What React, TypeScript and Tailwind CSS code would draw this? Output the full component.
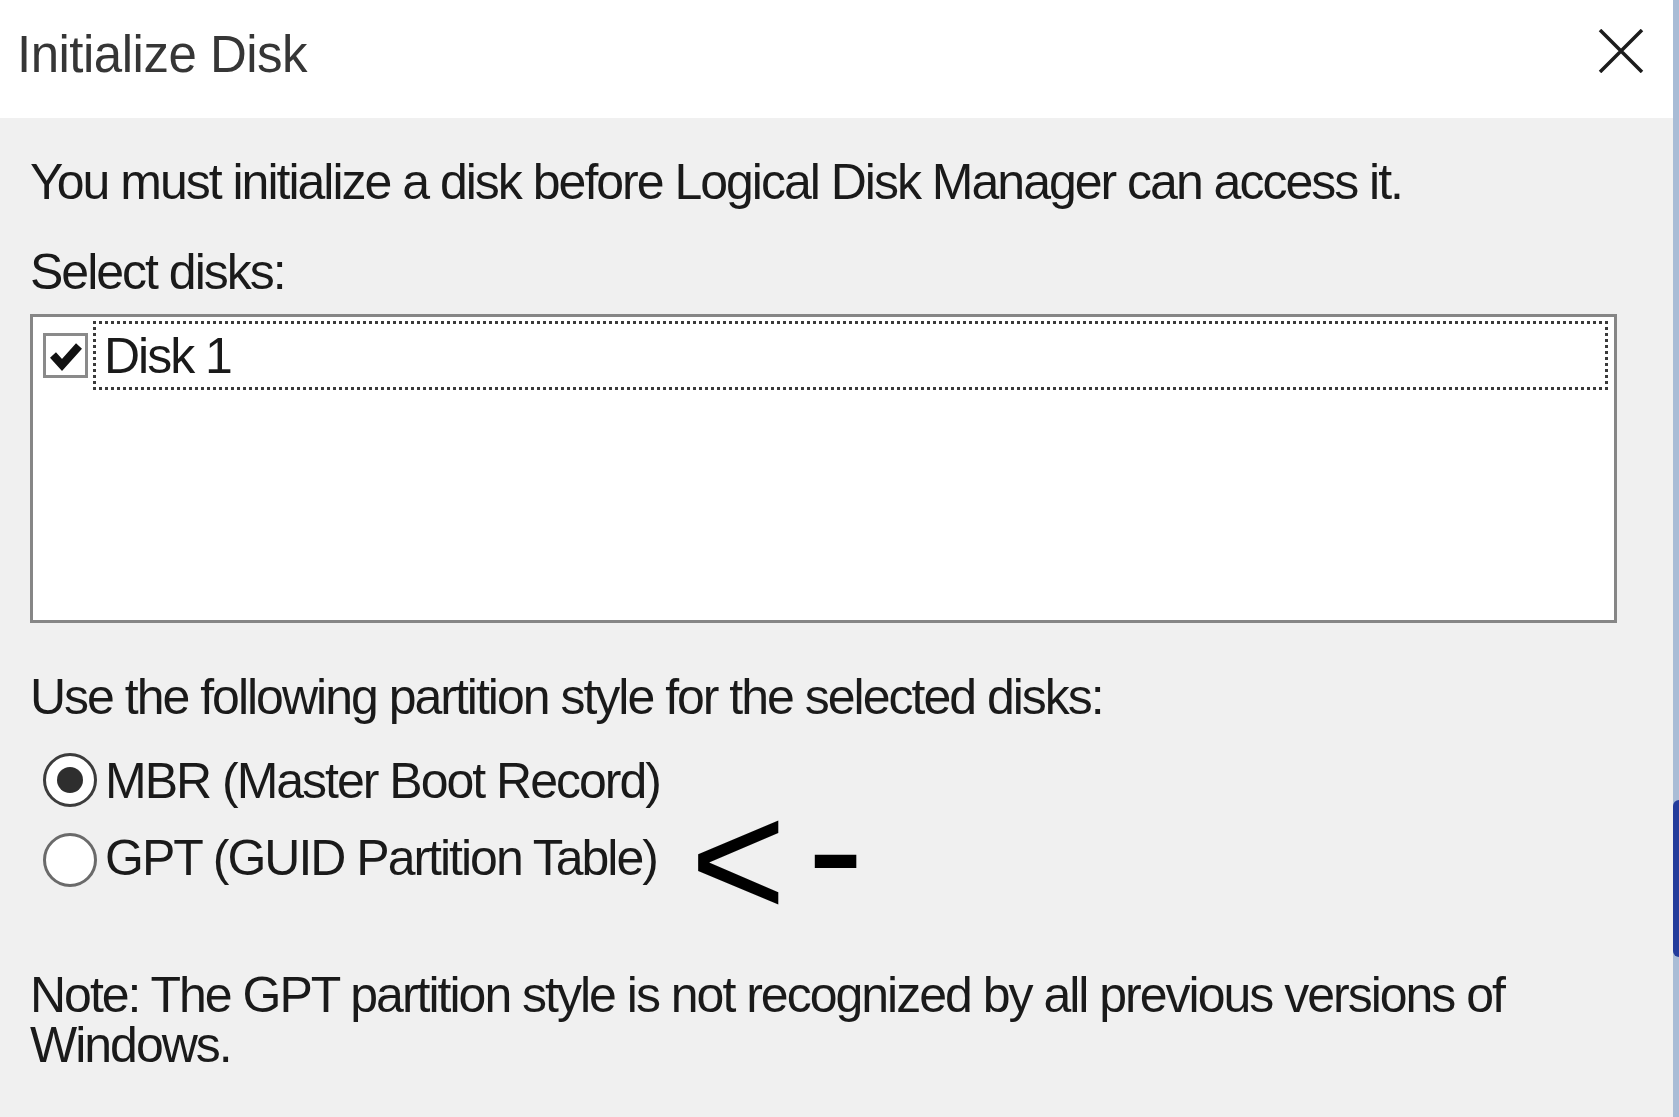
const body = "font-['Liberation_Sans',Arial,sans-serif] text-[50px] leading-none tracking-[-2px] text-[#1a1a1a]"

function CheckBox() {
  return (
    <div className="w-[45px] h-[45px] shrink-0 border-[3px] border-[#8a8a8a] bg-white flex items-center justify-center">
      <svg width="36" height="36" viewBox="0 0 36 36">
        <path d="M5 17 L14 27 L31 8" fill="none" stroke="#111" strokeWidth="8" strokeLinejoin="miter" />
      </svg>
    </div>
  )
}

function Radio({ checked }: { checked?: boolean }) {
  return (
    <div
      className={
        checked
          ? "w-[54px] h-[54px] shrink-0 rounded-full border-[3px] border-[#3c3c3c] bg-white flex items-center justify-center"
          : "w-[54px] h-[54px] shrink-0 rounded-full border-[3px] border-[#6a6a6a] bg-white"
      }
    >
      {checked && <div className="w-[26px] h-[26px] rounded-full bg-[#2e2e2e]" />}
    </div>
  )
}

export default function App() {
  return (
    <div className="w-[1679px] h-[1117px] flex overflow-hidden bg-[#f0f0f0]">
      <div className="flex-1 flex flex-col">
        {/* title bar */}
        <div className="h-[118px] bg-white flex items-start justify-between pl-[17px] pr-[29px]">
          <span className="mt-[29px] font-['Liberation_Sans',Arial,sans-serif] text-[51px] leading-none tracking-[-0.5px] text-[#363636]">
            Initialize Disk
          </span>
          <svg className="mt-[29px]" width="46" height="44" viewBox="0 0 46 44">
            <path d="M2 1 L44 43 M44 1 L2 43" stroke="#1c1c1c" strokeWidth="3.5" />
          </svg>
        </div>

        {/* dialog body */}
        <div className="flex flex-col pl-[30px] pt-[39px]">
          <p className={body}>You must initialize a disk before Logical Disk Manager can access it.</p>
          <p className={body + " mt-[40px]"}>Select disks:</p>

          <div className="mt-[17px] w-[1587px] h-[309px] border-[3px] border-[#868686] bg-white">
            <div className="flex items-center pl-[10px] pr-[6px] pt-[4px]">
              <CheckBox />
              <div className="ml-[5px] flex-1 h-[69px] border-[3px] border-dotted border-[#3a3a3a] flex items-center pl-[8px]">
                <span className={body}>Disk 1</span>
              </div>
            </div>
          </div>

          <p className={body + " mt-[49px]"}>Use the following partition style for the selected disks:</p>

          <div className="mt-[31px] flex items-start pl-[13px]">
            <Radio checked />
            <span className={body + " ml-[8px] mt-[3px]"}>MBR (Master Boot Record)</span>
          </div>
          <div className="mt-[26px] flex items-start pl-[13px]">
            <Radio />
            <span className={body + " ml-[8px]"}>GPT (GUID Partition Table)</span>
            <span className="ml-[33px] font-['Liberation_Sans',Arial,sans-serif] text-[165px] leading-[54px] text-black">&lt;</span>
            <span className="ml-[21px] mt-[3px] font-['Liberation_Sans',Arial,sans-serif] text-[170px] leading-[24px] text-black">-</span>
          </div>

          <p className={body + " mt-[83px] w-[1590px] leading-[55px]"}>
            Note: The GPT partition style is not recognized by all previous versions of Windows.
          </p>
        </div>
      </div>

      {/* edge of the window behind */}
      <div className="w-[6px] flex flex-col bg-[#a9bcd6]">
        <div className="mt-[800px] h-[157px] rounded-l-full bg-[#243c9c]" />
      </div>
    </div>
  )
}
